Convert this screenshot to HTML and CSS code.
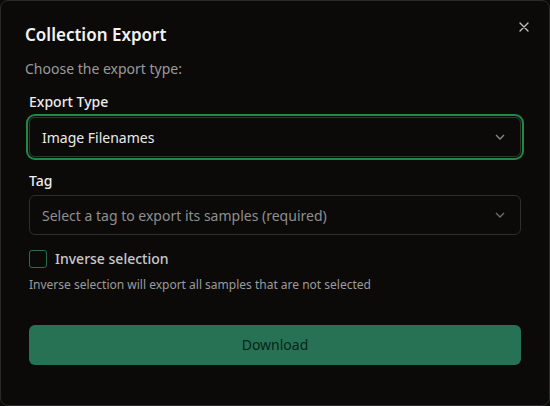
FILE: index.html
```html
<!DOCTYPE html>
<html lang="en">
<head>
    <meta charset="UTF-8">
    <meta name="viewport" content="width=device-width, initial-scale=1.0">
    <title>Collection Export</title>
    <link rel="stylesheet" href="styles.css">
</head>
<body>
    <div class="modal">
        <div class="modal-header">
            <h2>Collection Export</h2>
            <button class="close" aria-label="Close">
                <svg width="10" height="10" viewBox="0 0 10 10"><path d="M1 1L9 9M9 1L1 9" stroke="#bdbdbd" stroke-width="1.4" stroke-linecap="round"/></svg>
            </button>
        </div>
        <p class="subtitle">Choose the export type:</p>

        <div class="field">
            <label class="field-label">Export Type</label>
            <div class="select focused">
                <span>Image Filenames</span>
                <svg class="chevron" width="10" height="6" viewBox="0 0 10 6"><path d="M1 1L5 5L9 1" fill="none" stroke="#8a8a8a" stroke-width="1.3"/></svg>
            </div>
        </div>

        <div class="field">
            <label class="field-label">Tag</label>
            <div class="select">
                <span class="placeholder">Select a tag to export its samples (required)</span>
                <svg class="chevron" width="10" height="6" viewBox="0 0 10 6"><path d="M1 1L5 5L9 1" fill="none" stroke="#6e6e6e" stroke-width="1.3"/></svg>
            </div>
        </div>

        <div class="checkbox-row">
            <span class="checkbox"></span>
            <span class="checkbox-label">Inverse selection</span>
        </div>
        <p class="hint">Inverse selection will export all samples that are not selected</p>

        <button class="download">Download</button>
    </div>
</body>
</html>
```

FILE: styles.css
```css
body {
    margin: 0;
    background: #0b0a09;
    font-family: "Noto Sans", "Open Sans", sans-serif;
}
.modal {
    box-sizing: border-box;
    height: 406px;
    border: 1px solid #2a2a2c;
    border-radius: 8px;
    background: #0b0a09;
    padding: 0 28px 0 28px;
}
.modal-header {
    display: flex;
    justify-content: space-between;
    align-items: flex-start;
    padding-top: 22px;
}
.modal-header h2 {
    margin: 0 0 0 -4px;
    font-size: 17px;
    font-weight: 600;
    color: #f2f2f2;
    line-height: 24px;
}
.close {
    background: none;
    border: none;
    padding: 0;
    margin: -3px -8px 0 0;
    cursor: pointer;
}
.subtitle {
    margin: 12px 0 0 -4px;
    font-size: 14px;
    color: #9a9a9a;
    line-height: 20px;
}
.field {
    margin-top: 13px;
}
.field + .field {
    margin-top: 14px;
}
.field-label {
    display: block;
    font-size: 14px;
    font-weight: 500;
    color: #ededed;
    line-height: 20px;
    margin-bottom: 5px;
}
.field + .field .field-label {
    margin-bottom: 4px;
}
.select {
    box-sizing: border-box;
    height: 40px;
    border: 1px solid #2e2e2e;
    border-radius: 6px;
    display: flex;
    align-items: center;
    justify-content: space-between;
    padding: 0 15px 0 12px;
    font-size: 14px;
    color: #eaeaea;
}
.select.focused {
    box-shadow: 0 0 0 1px #0b0a09, 0 0 0 3px #1f8a44;
    border-color: #333333;
}
.select .placeholder {
    color: #8f8f8f;
}
.checkbox-row {
    display: flex;
    align-items: center;
    gap: 8px;
    margin-top: 14px;
}
.checkbox {
    box-sizing: border-box;
    width: 18px;
    height: 18px;
    border: 1px solid #2b6e4f;
    border-radius: 3px;
}
.checkbox-label {
    font-size: 14px;
    font-weight: 500;
    color: #c9c9c9;
    line-height: 20px;
}
.hint {
    margin: 8px 0 0 0;
    font-size: 12px;
    color: #9b9b9b;
    line-height: 16px;
}
.download {
    display: block;
    width: 100%;
    height: 40px;
    margin-top: 32px;
    border: none;
    border-radius: 6px;
    background: #277154;
    color: #0b2419;
    font-family: inherit;
    font-size: 14px;
    line-height: 18px;
    padding: 0;
    cursor: pointer;
}
```
